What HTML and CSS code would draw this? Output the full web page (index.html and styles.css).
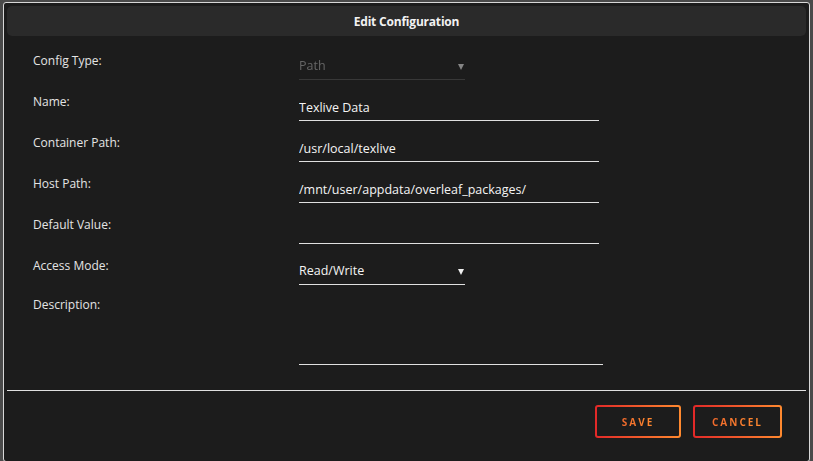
FILE: index.html
```html
<!DOCTYPE html>
<html lang="en">
<head>
    <meta charset="UTF-8">
    <meta name="viewport" content="width=device-width, initial-scale=1.0">
    <title>Edit Configuration</title>
    <link rel="stylesheet" href="styles.css">
</head>
<body>

<div class="dialog">
    <div class="titlebar">Edit Configuration</div>

    <form class="config-form">
        <label for="configType">Config Type:</label>
        <div class="select-wrap disabled">
            <select id="configType" disabled>
                <option>Path</option>
            </select>
        </div>

        <label for="name">Name:</label>
        <input type="text" id="name" value="Texlive Data">

        <label for="containerPath">Container Path:</label>
        <input type="text" id="containerPath" value="/usr/local/texlive">

        <label for="hostPath">Host Path:</label>
        <input type="text" id="hostPath" value="/mnt/user/appdata/overleaf_packages/">

        <label for="defaultValue">Default Value:</label>
        <input type="text" id="defaultValue" value="">

        <label for="accessMode">Access Mode:</label>
        <div class="select-wrap">
            <select id="accessMode">
                <option>Read/Write</option>
                <option>Read Only</option>
            </select>
        </div>

        <label for="description" class="desc-label">Description:</label>
        <textarea id="description"></textarea>
    </form>

    <div class="footer">
        <button type="button" class="btn save"><span>SAVE</span></button>
        <button type="button" class="btn cancel"><span>CANCEL</span></button>
    </div>
</div>

</body>
</html>
```

FILE: styles.css
```css
body {
    margin: 0;
    background-color: #4a4a4a;
    font-family: "Open Sans", "Noto Sans", sans-serif;
    font-size: 12px;
    color: #e4e4e4;
}
.dialog {
    margin: 2px 3px 0;
    height: 455px;
    border: 1px solid #d8d8d8;
    border-radius: 3px;
    background-color: #1c1c1c;
    padding: 3px 3px 0;
    display: flex;
    flex-direction: column;
}
.titlebar {
    height: 30px;
    line-height: 32px;
    background-color: #2a2a2a;
    border-radius: 5px;
    text-align: center;
    font-weight: bold;
    font-size: 12px;
    color: #f2f2f2;
    letter-spacing: -0.2px;
}
.config-form {
    display: grid;
    grid-template-columns: 266px 1fr;
    grid-auto-rows: 41px;
    padding: 16px 0 0 26px;
    height: 354px;
    box-sizing: border-box;
}
label {
    line-height: 18px;
}
.desc-label {
    margin-top: -2px;
}
input, select, textarea {
    font-family: inherit;
    font-size: 12.5px;
    color: #f4f4f4;
    background: transparent;
    border: none;
    border-bottom: 1px solid #e0e0e0;
    outline: none;
    margin: 4px 0 0;
    padding: 2px 0 5px;
    height: 24px;
    line-height: 16px;
    box-sizing: border-box;
    width: 300px;
}
.select-wrap {
    position: relative;
    width: 166px;
}
.select-wrap select {
    appearance: none;
    -webkit-appearance: none;
    width: 166px;
}
.select-wrap::after {
    content: "";
    position: absolute;
    right: 1px;
    top: 12px;
    border-left: 3px solid transparent;
    border-right: 3px solid transparent;
    border-top: 6px solid #f0f0f0;
    pointer-events: none;
}
.select-wrap.disabled select {
    color: #858585;
    border-bottom-color: #444;
}
.select-wrap.disabled::after {
    border-top-color: #858585;
}
textarea {
    width: 304px;
    height: 63px;
    resize: none;
}
.footer {
    border-top: 1px solid #e0e0e0;
    display: flex;
    justify-content: flex-end;
    gap: 12px;
    padding: 14px 24px 0 0;
}
.btn {
    height: 33px;
    border: 2px solid transparent;
    border-radius: 3px;
    background: linear-gradient(#1c1c1c, #1c1c1c) padding-box,
                linear-gradient(90deg, #e22828, #ff8a2f) border-box;
    font-family: inherit;
    font-weight: bold;
    font-size: 10px;
    letter-spacing: 2px;
    cursor: pointer;
}
.btn span {
    background: linear-gradient(90deg, #f26a2c, #ff8a2f);
    -webkit-background-clip: text;
    background-clip: text;
    color: transparent;
}
.save {
    width: 86px;
}
.cancel {
    width: 89px;
}
```
